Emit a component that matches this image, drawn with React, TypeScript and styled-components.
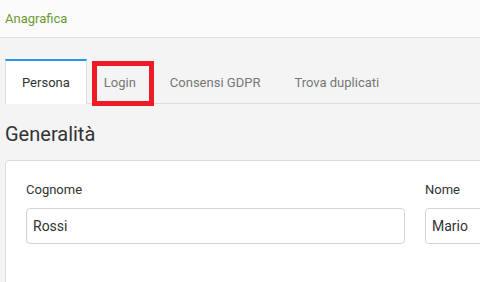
import React from "react";
import styled, { createGlobalStyle } from "styled-components";

const tabs = ["Persona", "Login", "Consensi GDPR", "Trova duplicati"];

const GlobalStyle = createGlobalStyle`
  html, body {
    margin: 0;
    padding: 0;
    overflow: hidden;
    background: #f4f4f4;
    font-family: Roboto, "Liberation Sans", sans-serif;
  }
`;

const App: React.FC = () => {
  return (
    <>
      <GlobalStyle />
      <Header>Anagrafica</Header>
      <Main>
        <TabBar>
          {tabs.map((tab, i) => (
            <Tab key={tab} active={i === 0}>
              {tab}
              {tab === "Login" && <Highlight />}
            </Tab>
          ))}
        </TabBar>
        <SectionTitle>Generalità</SectionTitle>
        <Card>
          <Field>
            <Label>Cognome</Label>
            <Input defaultValue="Rossi" />
          </Field>
          <Field>
            <Label>Nome</Label>
            <Input defaultValue="Mario" />
          </Field>
        </Card>
      </Main>
    </>
  );
};

// Styled Components
const Header = styled.div`
  height: 37px;
  line-height: 37px;
  padding-left: 5px;
  background: #fbfbfb;
  border-bottom: 1px solid #e2e2e2;
  color: #6b9a34;
  font-size: 13px;
`;

const Main = styled.div`
  padding: 21px 0 0 5px;
  background: #f4f4f4;
  min-height: 240px;
`;

const TabBar = styled.div`
  display: flex;
  border-bottom: 1px solid #dddddd;
`;

const Tab = styled.div<{ active?: boolean }>`
  position: relative;
  height: 43px;
  line-height: 43px;
  padding: 0 16px;
  font-size: 13px;
  color: ${({ active }) => (active ? "#333" : "#777")};
  background: ${({ active }) => (active ? "#fff" : "transparent")};
  border-top: 2px solid ${({ active }) => (active ? "#2196f3" : "transparent")};
  border-left: 1px solid ${({ active }) => (active ? "#dddddd" : "transparent")};
  border-right: 1px solid ${({ active }) => (active ? "#dddddd" : "transparent")};
  margin-bottom: -1px;
`;

const Highlight = styled.span`
  position: absolute;
  top: 0px;
  left: 4px;
  right: -2px;
  bottom: -2px;
  border: 5px solid #ed1c24;
`;

const SectionTitle = styled.h2`
  margin: 0;
  padding: 18px 0 14px;
  font-size: 20px;
  font-weight: 400;
  line-height: 24px;
  color: #333;
`;

const Card = styled.div`
  display: grid;
  grid-template-columns: 379px 379px;
  gap: 20px;
  width: 800px;
  padding: 20px 20px 60px;
  background: #fff;
  border: 1px solid #dddddd;
  border-radius: 4px;
`;

const Field = styled.div`
  display: flex;
  flex-direction: column;
`;

const Label = styled.label`
  font-size: 13px;
  line-height: 18px;
  color: #333;
  margin: 0 0 9px;
`;

const Input = styled.input`
  box-sizing: border-box;
  height: 36px;
  padding: 0 6px;
  border: 1px solid #d4d4d4;
  border-radius: 4px;
  font-family: Roboto, "Liberation Sans", sans-serif;
  font-size: 14px;
  color: #333;
  outline: none;
`;

export default App;
